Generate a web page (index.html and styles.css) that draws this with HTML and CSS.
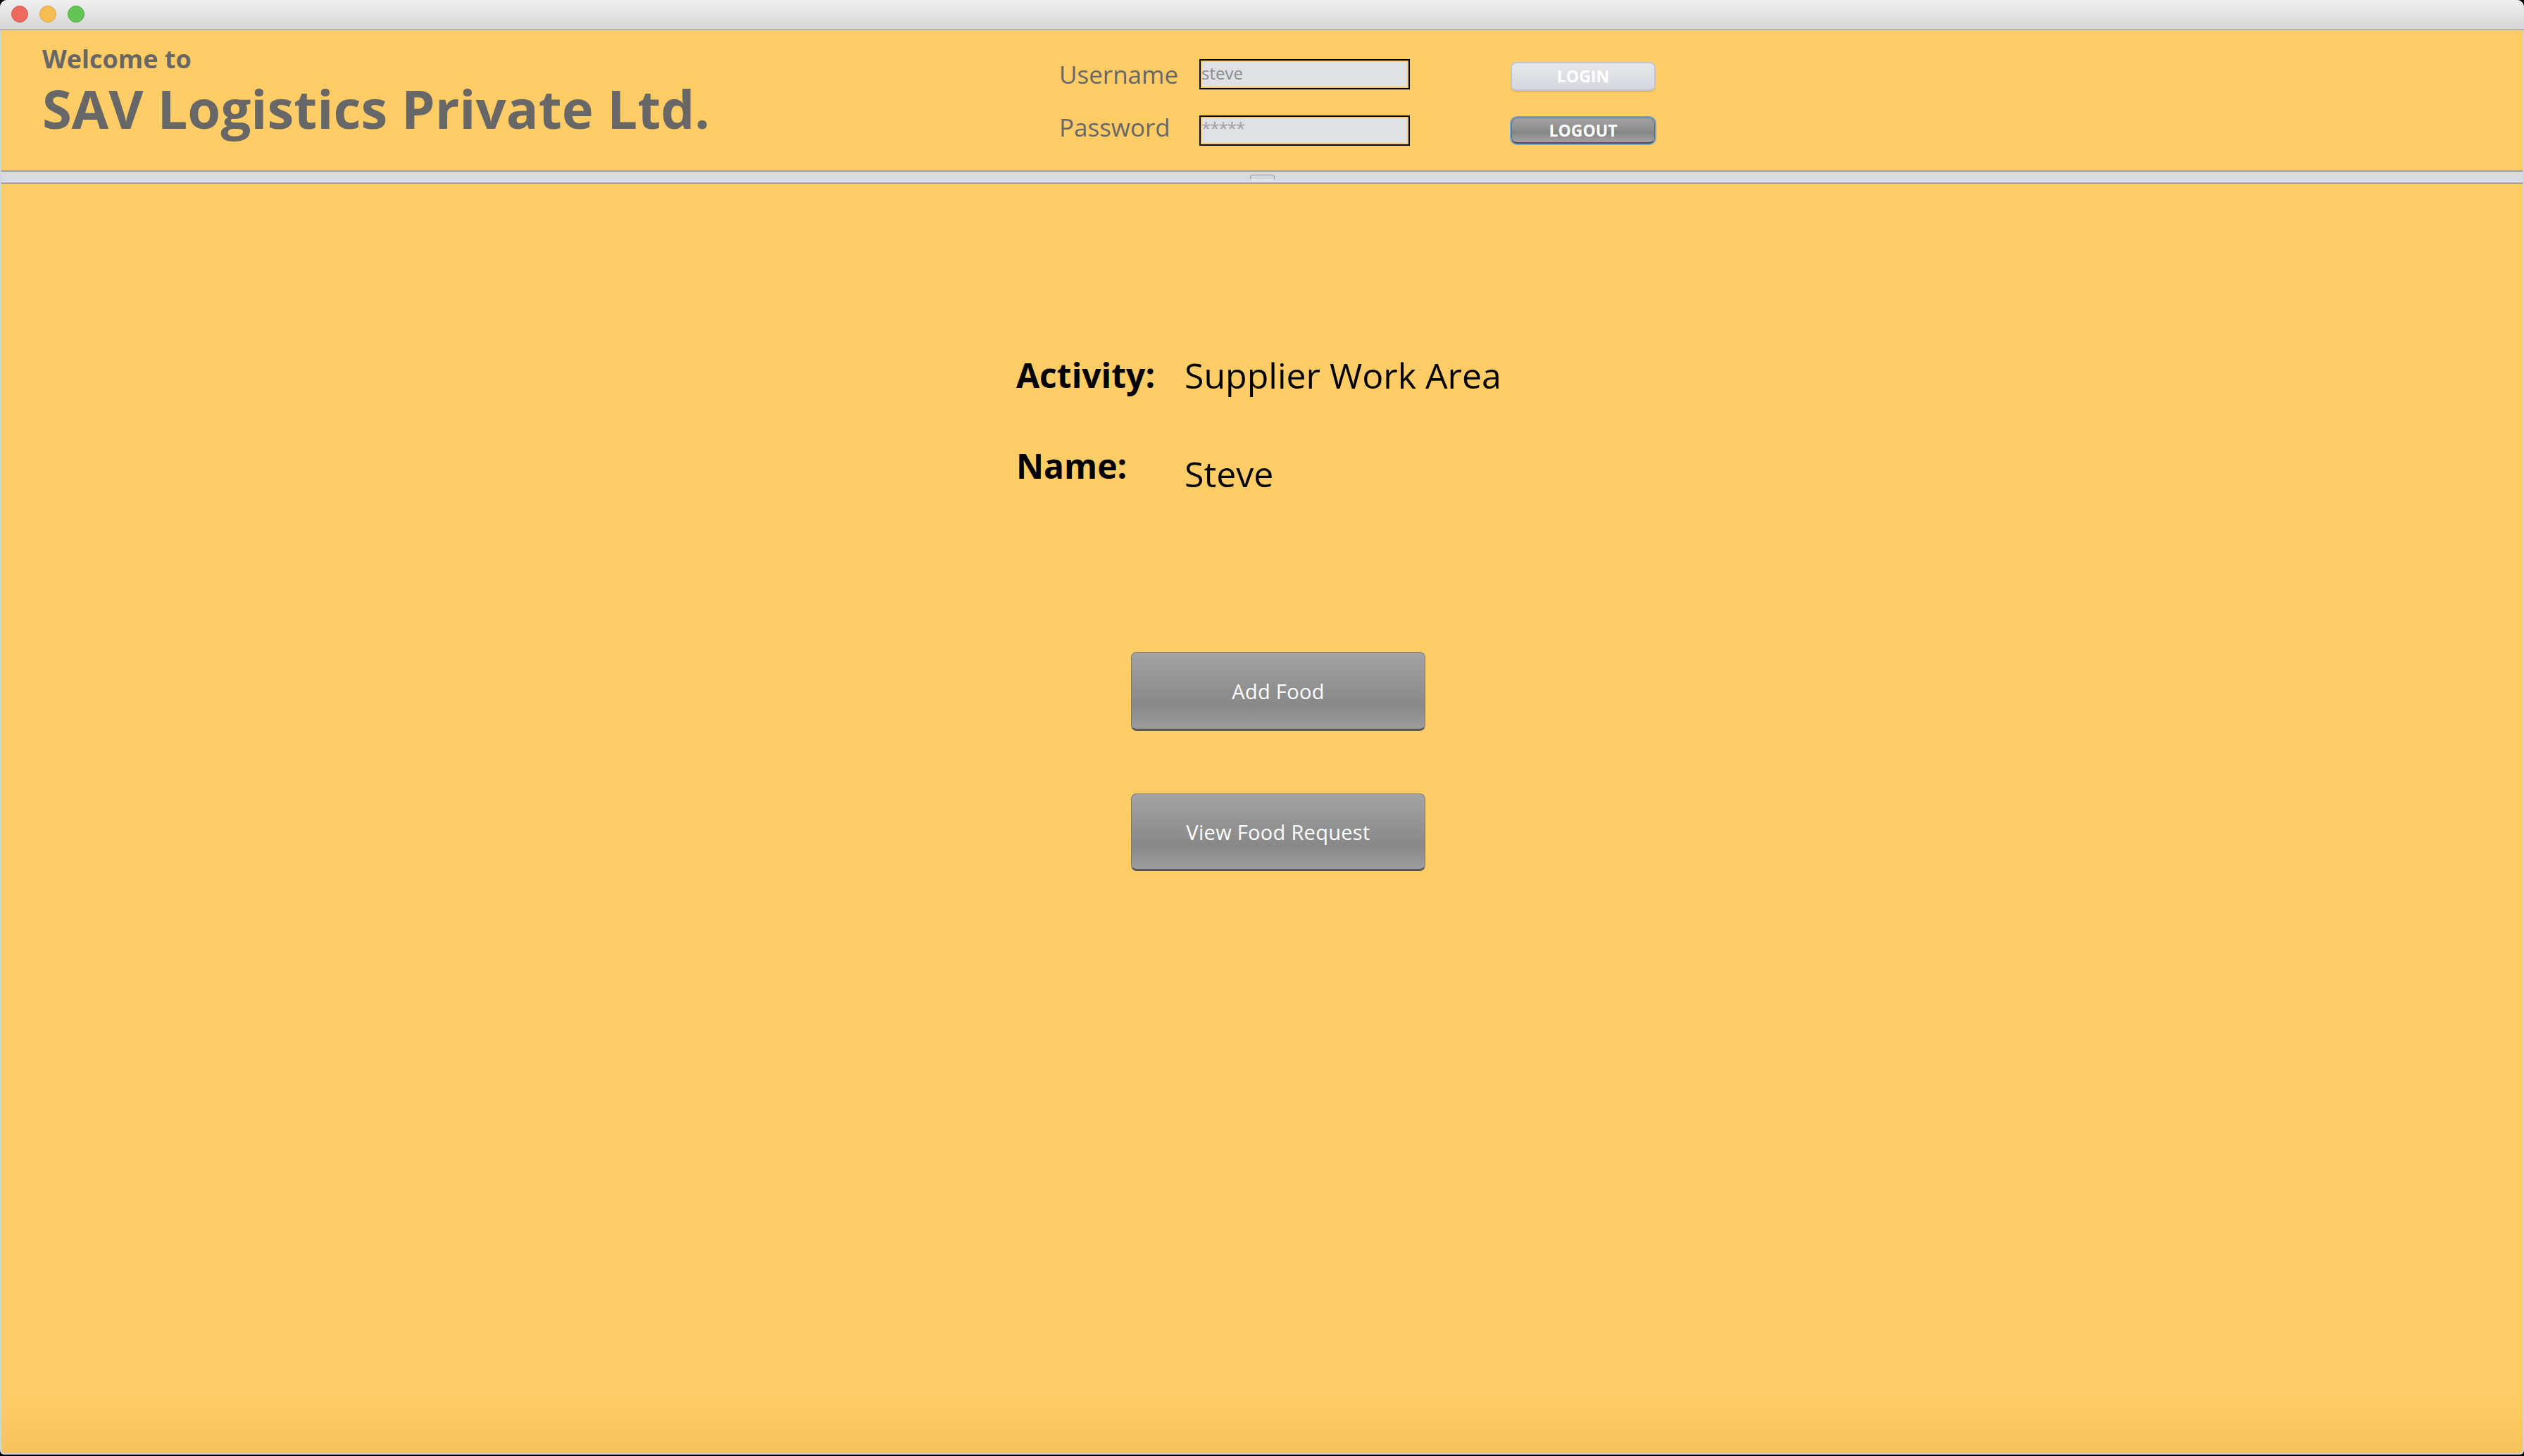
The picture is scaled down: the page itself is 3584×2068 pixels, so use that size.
FILE: index.html
```html
<!DOCTYPE html>
<html lang="en">
<head>
<meta charset="utf-8">
<title>SAV Logistics Private Ltd.</title>
<link rel="stylesheet" href="styles.css">
</head>
<body>
<div class="window">
  <div class="titlebar">
    <span class="light red"></span>
    <span class="light yellow"></span>
    <span class="light green"></span>
  </div>
  <div class="content">
    <div class="header">
      <div class="brand">
        <div class="welcome">Welcome to</div>
        <div class="company">SAV Logistics Private Ltd.</div>
      </div>
      <div class="login">
        <label class="field-label">Username</label>
        <div class="field"><span class="field-text">steve</span></div>
        <button class="btn-small btn-login">LOGIN</button>
        <label class="field-label pw-label">Password</label>
        <div class="field"><span class="field-text pass">*****</span></div>
        <button class="btn-small btn-logout">LOGOUT</button>
      </div>
    </div>
    <div class="splitter"><span class="handle"></span></div>
    <div class="main">
      <div class="info">
        <div class="info-label">Activity:</div>
        <div class="info-value">Supplier Work Area</div>
        <div class="info-label">Name:</div>
        <div class="info-value lower">Steve</div>
      </div>
      <div class="actions">
        <button class="btn-big">Add Food</button>
        <button class="btn-big second">View Food Request</button>
      </div>
    </div>
  </div>
</div>
</body>
</html>
```

FILE: styles.css
```css
html, body {
  margin: 0;
  padding: 0;
}
body {
  background: #000;
  width: 3584px;
  height: 2068px;
  overflow: hidden;
  font-family: "Open Sans", "Noto Sans", sans-serif;
}
.window {
  width: 3584px;
  height: 2066px;
  display: flex;
  flex-direction: column;
  background: #cfd4dc;
  border-radius: 10px 10px 6px 6px;
  overflow: hidden;
}
.titlebar {
  height: 41px;
  flex: 0 0 41px;
  display: flex;
  align-items: center;
  gap: 16px;
  padding-left: 16px;
  background: linear-gradient(to bottom, #efefef, #d6d6d6);
  border-bottom: 2px solid #b2b2b2;
}
.light {
  width: 22px;
  height: 22px;
  border-radius: 50%;
  border: 1px solid;
  margin-top: -1px;
}
.red { background: #ee6a5f; border-color: #d4574c; }
.yellow { background: #f6be50; border-color: #d9a23f; }
.green { background: #62c554; border-color: #50a83f; }

.content {
  flex: 1;
  display: flex;
  flex-direction: column;
  margin: 0 2px 2px 2px;
  border-radius: 0 0 6px 6px;
  overflow: hidden;
}
.header {
  height: 199px;
  flex: 0 0 199px;
  background: #ffcc66;
  display: flex;
  box-sizing: border-box;
}
.brand {
  width: 1502px;
  flex: 0 0 1502px;
  box-sizing: border-box;
  padding-left: 58px;
  padding-top: 23px;
  color: #676767;
  font-weight: 700;
}
.welcome {
  font-size: 36px;
  line-height: 36px;
}
.company {
  font-size: 76px;
  line-height: 76px;
  margin-top: 14px;
}
.login {
  display: grid;
  grid-template-columns: 199px 299px 351px;
  grid-template-rows: 43px 43px;
  row-gap: 37px;
  padding-top: 41px;
  align-items: center;
}
.field-label {
  font-size: 35px;
  color: #676767;
  line-height: 43px;
}
.pw-label {
  margin-top: -10px;
}
.field {
  height: 43px;
  box-sizing: border-box;
  border: 2px solid #000;
  box-shadow: inset 0 0 0 2px #ffcc66;
  background: #dfe1e5;
  display: flex;
  align-items: center;
  padding-left: 1px;
}
.field-text {
  font-size: 24px;
  color: #8c8c8c;
  line-height: 1;
  margin-top: -4px;
}
.field-text.pass {
  color: #a0a0a0;
  margin-top: -8px;
  letter-spacing: -1px;
}
.btn-small {
  justify-self: end;
  width: 206px;
  height: 41px;
  box-sizing: border-box;
  border-radius: 8px;
  font-family: "Open Sans", sans-serif;
  font-weight: 700;
  font-size: 23px;
  color: #fff;
  padding: 0;
  line-height: 1;
  cursor: default;
}
.btn-login {
  margin-right: 2px;
  margin-top: 5px;
  border: 2px solid #c1c5ce;
  background: linear-gradient(to bottom, #e6e7eb, #d5d8de);
  box-shadow: 0 2px 0 #eab85a;
}
.btn-logout {
  width: 204px;
  height: 37px;
  margin-right: 3px;
  border: 1px solid #6a6a6a;
  border-bottom: 2px solid #4e4e4e;
  background: linear-gradient(to bottom, #a2a2a2 0%, #8f8f8f 45%, #858585 60%, #a4a4a4 100%);
  box-shadow: 0 0 0 2px #74a3d8;
}
.splitter {
  height: 19px;
  flex: 0 0 19px;
  box-sizing: border-box;
  border-top: 2px solid #9a9fa8;
  border-bottom: 2px solid #9a9fa8;
  background: linear-gradient(to bottom, #d8dbe2 0, #d8dbe2 14px, #f0f1f4 14px);
  display: flex;
  justify-content: center;
  align-items: flex-start;
}
.handle {
  width: 35px;
  height: 8px;
  margin-top: 4px;
  box-sizing: border-box;
  border-radius: 5px;
  border: 1px solid #9299a5;
  border-bottom-color: #ffffff;
  background: #d3d6dd;
}
.main {
  flex: 1;
  position: relative;
  background: #ffcc66;
  padding-top: 239px;
  padding-left: 1441px;
  box-sizing: border-box;
}
.main::after {
  content: "";
  position: absolute;
  left: 0;
  right: 0;
  bottom: 0;
  height: 80px;
  background: linear-gradient(to bottom, rgba(160, 110, 0, 0), rgba(160, 110, 0, 0.1));
  pointer-events: none;
}
.info {
  display: grid;
  grid-template-columns: 239px auto;
  row-gap: 63px;
  align-items: start;
  color: #000;
  font-size: 48px;
  line-height: 66px;
}
.info-label {
  font-weight: 700;
}
.info-value {
  font-weight: 400;
  font-size: 50px;
}
.info-value.lower {
  margin-top: 11px;
}
.actions {
  display: flex;
  flex-direction: column;
  align-items: flex-start;
  margin-top: 220px;
  margin-left: 163px;
  gap: 89px;
}
.btn-big {
  width: 418px;
  height: 112px;
  box-sizing: border-box;
  border-radius: 8px;
  border: 1px solid #7c7c7c;
  border-bottom: 3px solid #575757;
  background: linear-gradient(to bottom, #a3a3a3 0%, #939393 40%, #888888 70%, #9d9d9d 100%);
  color: #fff;
  font-family: "Open Sans", sans-serif;
  font-size: 29px;
  letter-spacing: 0.3px;
  padding: 0;
  cursor: default;
}
.btn-big.second {
  height: 110px;
}
```
